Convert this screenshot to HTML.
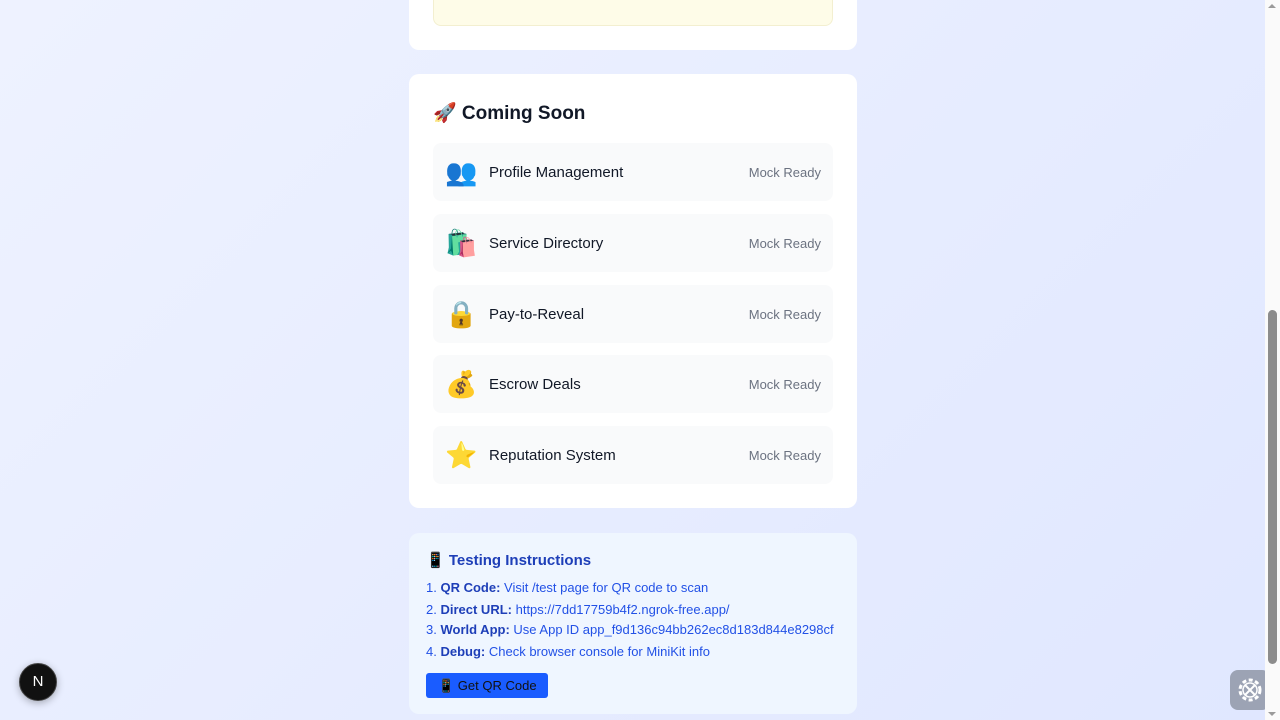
<!DOCTYPE html>
<html><head><meta charset="utf-8"><style>
*{box-sizing:border-box;margin:0;padding:0}
body{width:1280px;height:720px;overflow:hidden;font-family:"Liberation Sans","Noto Sans CJK SC",sans-serif;background:linear-gradient(135deg,#eef2ff,#e0e7ff);position:relative}
.card{position:absolute;left:409px;width:448px;background:#fff;border-radius:10px}
.row{position:absolute;left:24px;width:400px;height:58px;background:#f9fafb;border-radius:8px}
.row .ic{position:absolute;left:12px;top:14px;font-size:26px;line-height:30px}
.row .t{position:absolute;left:56px;top:21px;font-size:15px;color:#111827}
.row .m{position:absolute;right:12px;top:22px;font-size:13px;color:#6b7280}
.li{position:absolute;left:17px;font-size:13px;color:#2251e6}
.li b{color:#1e3fb8}
</style></head><body>
<div class="card" style="top:-20px;height:70px">
 <div style="position:absolute;left:24px;top:0;width:400px;height:46px;background:#fefce8;border:1px solid #f3efd0;border-radius:8px"></div>
</div>
<div class="card" style="top:74px;height:434px">
 <div style="position:absolute;left:24px;top:27px;font-size:19px;font-weight:bold;color:#111827">🚀 Coming Soon</div>
 <div class="row" style="top:69px"><span class="ic">👥</span><span class="t">Profile Management</span><span class="m">Mock Ready</span></div>
 <div class="row" style="top:140px"><span class="ic">🛍️</span><span class="t">Service Directory</span><span class="m">Mock Ready</span></div>
 <div class="row" style="top:211px"><span class="ic">🔒</span><span class="t">Pay-to-Reveal</span><span class="m">Mock Ready</span></div>
 <div class="row" style="top:281px"><span class="ic">💰</span><span class="t">Escrow Deals</span><span class="m">Mock Ready</span></div>
 <div class="row" style="top:352px"><span class="ic">⭐</span><span class="t">Reputation System</span><span class="m">Mock Ready</span></div>
</div>
<div class="card" style="top:533px;height:181px;background:#eff6ff">
 <div style="position:absolute;left:17px;top:18px;font-size:15px;font-weight:bold;color:#1e3fb8">📱 Testing Instructions</div>
 <div class="li" style="top:47px">1. <b>QR Code:</b> Visit /test page for QR code to scan</div>
 <div class="li" style="top:69px">2. <b>Direct URL:</b> https://7dd17759b4f2.ngrok-free.app/</div>
 <div class="li" style="top:89px">3. <b>World App:</b> Use App ID app_f9d136c94bb262ec8d183d844e8298cf</div>
 <div class="li" style="top:111px">4. <b>Debug:</b> Check browser console for MiniKit info</div>
 <div style="position:absolute;left:17px;top:140px;width:122px;height:25px;background:#1a5cff;border-radius:3px;font-size:13px;color:#111;line-height:25px;padding-left:12px">📱 Get QR Code</div>
</div>
<div style="position:absolute;left:19px;top:663px;width:38px;height:38px;border-radius:50%;background:#111;border:1px solid #444;color:#fff;font-size:15px;line-height:36px;text-align:center;box-shadow:0 2px 8px rgba(0,0,0,.3)">N</div>
<div style="position:absolute;left:1230px;top:670px;width:40px;height:40px;border-radius:8px;background:#9ca3b4"><svg width="40" height="40" viewBox="0 0 40 40"><circle cx="20" cy="20" r="10" fill="none" stroke="#fff" stroke-width="3" stroke-dasharray="4 2.5"/><circle cx="20" cy="20" r="7" fill="none" stroke="#fff" stroke-width="1.5"/><path d="M15 15L25 25M25 15L15 25" stroke="#fff" stroke-width="2"/></svg></div>
<div style="position:absolute;left:1265px;top:0;width:15px;height:720px;background:#fafafa"></div>
<div style="position:absolute;left:1268px;top:310px;width:9px;height:354px;background:#8c8c8c;border-radius:5px"></div>
<div style="position:absolute;left:1268px;top:4px;width:0;height:0;border-left:4px solid transparent;border-right:4px solid transparent;border-bottom:4px solid #9a9a9a"></div>
<div style="position:absolute;left:1268px;top:712px;width:0;height:0;border-left:4px solid transparent;border-right:4px solid transparent;border-top:4px solid #9a9a9a"></div>
</body></html>
